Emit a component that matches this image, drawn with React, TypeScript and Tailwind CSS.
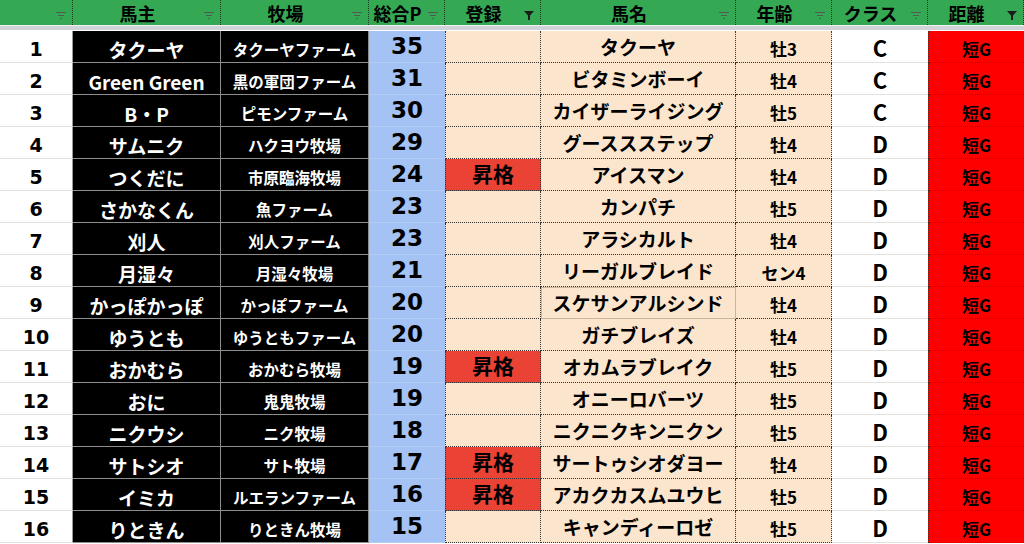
import React from "react";

type Row = {
  no: number;
  owner: string;
  farm: string;
  pts: number;
  reg: string;
  horse: string;
  age: string;
  cls: string;
};

const rows: Row[] = [
  { no: 1, owner: "タクーヤ", farm: "タクーヤファーム", pts: 35, reg: "", horse: "タクーヤ", age: "牡3", cls: "C" },
  { no: 2, owner: "Green Green", farm: "黒の軍団ファーム", pts: 31, reg: "", horse: "ビタミンボーイ", age: "牡4", cls: "C" },
  { no: 3, owner: "B・P", farm: "ピモンファーム", pts: 30, reg: "", horse: "カイザーライジング", age: "牡5", cls: "C" },
  { no: 4, owner: "サムニク", farm: "ハクヨウ牧場", pts: 29, reg: "", horse: "グーススステップ", age: "牡4", cls: "D" },
  { no: 5, owner: "つくだに", farm: "市原臨海牧場", pts: 24, reg: "昇格", horse: "アイスマン", age: "牡4", cls: "D" },
  { no: 6, owner: "さかなくん", farm: "魚ファーム", pts: 23, reg: "", horse: "カンパチ", age: "牡5", cls: "D" },
  { no: 7, owner: "刈人", farm: "刈人ファーム", pts: 23, reg: "", horse: "アラシカルト", age: "牡4", cls: "D" },
  { no: 8, owner: "月湿々", farm: "月湿々牧場", pts: 21, reg: "", horse: "リーガルブレイド", age: "セン4", cls: "D" },
  { no: 9, owner: "かっぽかっぽ", farm: "かっぽファーム", pts: 20, reg: "", horse: "スケサンアルシンド", age: "牡4", cls: "D" },
  { no: 10, owner: "ゆうとも", farm: "ゆうともファーム", pts: 20, reg: "", horse: "ガチブレイズ", age: "牡4", cls: "D" },
  { no: 11, owner: "おかむら", farm: "おかむら牧場", pts: 19, reg: "昇格", horse: "オカムラブレイク", age: "牡5", cls: "D" },
  { no: 12, owner: "おに", farm: "鬼鬼牧場", pts: 19, reg: "", horse: "オニーロバーツ", age: "牡5", cls: "D" },
  { no: 13, owner: "ニクウシ", farm: "ニク牧場", pts: 18, reg: "", horse: "ニクニクキンニクン", age: "牡5", cls: "D" },
  { no: 14, owner: "サトシオ", farm: "サト牧場", pts: 17, reg: "昇格", horse: "サートゥシオダヨー", age: "牡4", cls: "D" },
  { no: 15, owner: "イミカ", farm: "ルエランファーム", pts: 16, reg: "昇格", horse: "アカクカスムユウヒ", age: "牡5", cls: "D" },
  { no: 16, owner: "りときん", farm: "りときん牧場", pts: 15, reg: "", horse: "キャンディーロゼ", age: "牡5", cls: "D" },
];

const headers = [
  { label: "", active: false },
  { label: "馬主", active: false },
  { label: "牧場", active: false },
  { label: "総合P", active: false },
  { label: "登録", active: true },
  { label: "馬名", active: false },
  { label: "年齢", active: false },
  { label: "クラス", active: false },
  { label: "距離", active: true },
];

function FilterIcon({ active }: { active: boolean }) {
  if (active) {
    return (
      <svg width="12" height="12" viewBox="0 0 12 12" className="absolute right-[5px] top-[9px]">
        <path d="M1 2h10L7 6.5V11H5V6.5z" fill="#1b1b1b" />
      </svg>
    );
  }
  return (
    <svg width="12" height="10" viewBox="0 0 12 10" className="absolute right-[5px] top-[10px]">
      <path d="M1 2.5h10M3 5.5h6M5 8.5h2" stroke="#4d5b52" strokeWidth="1" />
    </svg>
  );
}

const cell = "flex items-center justify-center h-[32px] font-bold whitespace-nowrap leading-none";
// Verdana-like digits, the way Meiryo draws them
const digits = "font-['DejaVu_Sans',sans-serif]";

export default function App() {
  return (
    <div
      className="w-[1024px] h-[544px] overflow-hidden bg-white text-black"
      style={{ fontFamily: '"Noto Sans CJK JP", "Noto Sans", sans-serif' }}
    >
      <div className="grid grid-cols-[73px_148px_148px_76px_96px_195px_96px_96px_96px]">
        {headers.map((h, i) => (
          <div
            key={i}
            className="relative flex h-[25px] items-center justify-center border-r border-dotted border-[#1e3a25] bg-[#34a853] pr-[18px] text-[18px] font-bold leading-none"
          >
            {h.label}
            <FilterIcon active={h.active} />
          </div>
        ))}
      </div>
      <div className="h-[6px] border-t border-[#f1f3f4] border-b border-b-white bg-[#d0d4d9]" />
      <div className="grid grid-cols-[73px_148px_148px_76px_96px_195px_96px_96px_96px]">
        {rows.map((r) => (
          <React.Fragment key={r.no}>
            <div className={`${cell} ${digits} border-r border-[#9a9a9a] border-b border-b-[#e2e2e2] text-[19px] pt-[5px]`}>
              {r.no}
            </div>
            <div className={`${cell} bg-black text-white border-r border-b border-[#8d8d8d] text-[19px] pt-[5px]`}>
              {r.owner}
            </div>
            <div className={`${cell} bg-black text-white border-r border-b border-[#8d8d8d] text-[15.5px] pt-[6px]`}>
              {r.farm}
            </div>
            <div className={`${cell} ${digits} bg-[#a4c2f4] border-b border-[#b3ccf3] text-[23px]`}>
              {r.pts}
            </div>
            <div
              className={`${cell} border-l border-r border-b border-dotted border-[#333] text-[21px] pb-[2px] ${
                r.reg ? "bg-[#ea4335]" : "bg-[#fce5cd]"
              }`}
            >
              {r.reg}
            </div>
            <div
              className={`${cell} bg-[#fce5cd] border-r border-b border-dotted border-[#333] text-[19px] ${
                r.no === 9 ? "outline outline-1 -outline-offset-1 outline-[#c9b59f]" : ""
              }`}
            >
              {r.horse}
            </div>
            <div className={`${cell} bg-[#fce5cd] border-r border-b border-dotted border-[#333] text-[17px] pt-[4px]`}>
              {r.age}
            </div>
            <div className={`${cell} bg-white border-b border-[#e2e2e2] text-[22px]`}>
              {r.cls}
            </div>
            <div className={`${cell} bg-[#ff0000] border-l border-b border-dotted border-[#333] text-[17px] pt-[4px]`}>
              短G
            </div>
          </React.Fragment>
        ))}
      </div>
    </div>
  );
}
